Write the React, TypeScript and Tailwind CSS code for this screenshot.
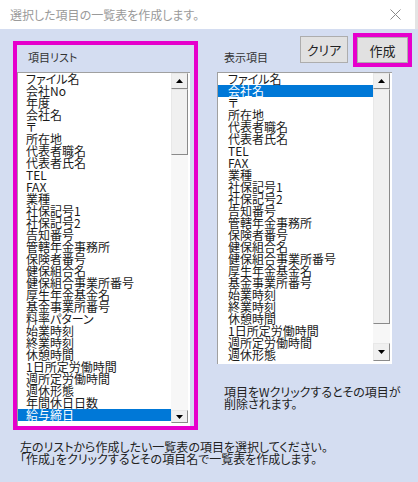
const sourceItems = [
  "ファイル名",
  "会社No",
  "年度",
  "会社名",
  "〒",
  "所在地",
  "代表者職名",
  "代表者氏名",
  "TEL",
  "FAX",
  "業種",
  "社保記号1",
  "社保記号2",
  "告知番号",
  "管轄年金事務所",
  "保険者番号",
  "健保組合名",
  "健保組合事業所番号",
  "厚生年金基金名",
  "基金事業所番号",
  "料率パターン",
  "始業時刻",
  "終業時刻",
  "休憩時間",
  "1日所定労働時間",
  "週所定労働時間",
  "週休形態",
  "年間休日日数",
  "給与締日",
];

const shownItems = [
  "ファイル名",
  "会社名",
  "〒",
  "所在地",
  "代表者職名",
  "代表者氏名",
  "TEL",
  "FAX",
  "業種",
  "社保記号1",
  "社保記号2",
  "告知番号",
  "管轄年金事務所",
  "保険者番号",
  "健保組合名",
  "健保組合事業所番号",
  "厚生年金基金名",
  "基金事業所番号",
  "始業時刻",
  "終業時刻",
  "休憩時間",
  "1日所定労働時間",
  "週所定労働時間",
  "週休形態",
];

function Arrow({ down = false }: { down?: boolean }) {
  return (
    <svg width="7" height="4" viewBox="0 0 7 4">
      {down ? <polygon points="0,0 7,0 3.5,4" fill="#000" /> : <polygon points="0,4 7,4 3.5,0" fill="#000" />}
    </svg>
  );
}

function ScrollButton({ down = false, h }: { down?: boolean; h: string }) {
  return (
    <div
      className={`${h} flex items-center justify-center border-t border-l border-t-[#e8e8e8] border-l-[#e8e8e8] border-r border-b border-r-[#8a8a8a] border-b-[#8a8a8a] bg-[#f0f0f0]`}
    >
      <Arrow down={down} />
    </div>
  );
}

interface ListProps {
  items: string[];
  selected: number;
  textPad: string;
  thumbClass: string;
  trackClass: string;
  upClass: string;
  downClass: string;
}

function ListBox({ items, selected, textPad, thumbClass, trackClass, upClass, downClass }: ListProps) {
  return (
    <div className="flex h-full border-t border-l border-[#a0a0a0] bg-white pr-[2px] pb-[3px]">
      <div className="flex-1 overflow-hidden">
        {items.map((item, i) => (
          <div
            key={item}
            className={`h-[12px] leading-[12px] whitespace-nowrap ${textPad} ${
              i === selected ? "bg-[#0078d7] text-white" : "text-[#1a1a1a]"
            }`}
          >
            {item}
          </div>
        ))}
      </div>
      <div className="flex w-[17px] flex-col bg-[#f7f7f7]">
        <ScrollButton h={upClass} />
        <div
          className={`${thumbClass} border-t border-l border-t-[#e8e8e8] border-l-[#e8e8e8] border-r border-b border-r-[#8a8a8a] border-b-[#8a8a8a] bg-[#f0f0f0]`}
        />
        <div className={trackClass} />
        <ScrollButton down h={downClass} />
      </div>
    </div>
  );
}

export default function App() {
  return (
    <div className="h-[482px] w-[418px] overflow-hidden bg-[#d4ddf1] text-[12px] font-['Noto_Sans_CJK_JP',sans-serif] [font-feature-settings:'palt']">
      {/* title bar */}
      <div className="flex h-[29px]">
        <div className="flex w-[415px] items-center justify-between bg-white pl-[10px] pr-[14px]">
          <span className="text-[12px] leading-[12px] text-[#9a9a9a]">選択した項目の一覧表を作成します。</span>
          <svg width="11" height="11" viewBox="0 0 11 11">
            <path d="M0.5 0.5 L10.5 10.5 M10.5 0.5 L0.5 10.5" stroke="#8a8a8a" strokeWidth="1" />
          </svg>
        </div>
        <div className="w-[3px] bg-[#e4e4e4]" />
      </div>

      <div className="flex items-start pl-[13px]">
        {/* source list frame */}
        <div className="mt-[12px] flex h-[389px] w-[185px] flex-col border-[4px] border-[#e600cc]">
          <div className="h-[27px] pt-[6px] pl-[11px] text-[11px] leading-[12px] text-[#333]">項目リスト</div>
          <div className="mr-[4px] flex-1">
            <ListBox
              items={sourceItems}
              selected={28}
              textPad="pl-[8px]"
              upClass="h-[16px]"
              thumbClass="h-[66px]"
              trackClass="flex-1"
              downClass="h-[13px]"
            />
          </div>
        </div>

        {/* shown list column */}
        <div className="ml-[19px] flex w-[198px] flex-col">
          <div className="flex h-[43px]">
            <div className="w-[83px] pt-[22px] pl-[7px] text-[11px] leading-[12px] text-[#333]">表示項目</div>
            <button className="mt-[7px] h-[27px] w-[48px] border border-[#adadad] bg-[#e1e1e1] text-[13px] leading-[13px] text-[#222]">
              クリア
            </button>
            <div className="mt-[4px] ml-[5px] h-[34px] w-[59px] border-[4px] border-[#e600cc]">
              <button className="h-[26px] w-[51px] border border-[#adadad] bg-[#e1e1e1] text-[13px] leading-[13px] text-[#222]">
                作成
              </button>
            </div>
          </div>
          <div className="h-[292px] w-[175px]">
            <ListBox
              items={shownItems}
              selected={1}
              textPad="pl-[10px]"
              upClass="h-[16px]"
              thumbClass="h-[235px]"
              trackClass="flex-1"
              downClass="h-[18px]"
            />
          </div>
          <div className="mt-[22px] pl-[7px] leading-[12px] text-[#222]">
            <div>項目をWクリックするとその項目が</div>
            <div>削除されます。</div>
          </div>
        </div>
      </div>

      <div className="mt-[11px] pl-[20px] leading-[12px] text-[#222]">
        <div>左のリストから作成したい一覧表の項目を選択してください。</div>
        <div>「作成」をクリックするとその項目名で一覧表を作成します。</div>
      </div>
    </div>
  );
}
